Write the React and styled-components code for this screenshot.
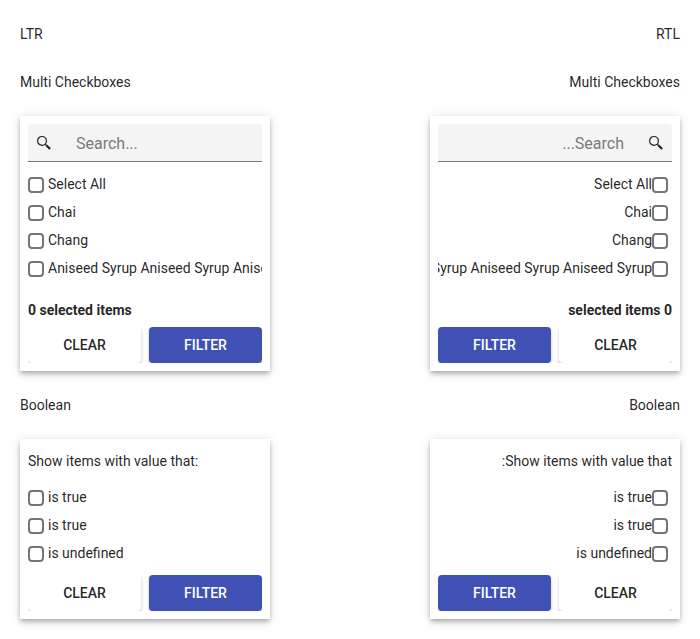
import React from 'react';
import styled, { createGlobalStyle } from 'styled-components';

const GlobalStyle = createGlobalStyle`
  * { box-sizing: border-box; }
  body {
    margin: 0;
    background: #fff;
    color: rgba(0, 0, 0, 0.87);
    font: 14px/20px Roboto, sans-serif;
  }
`;

const Page = styled.main`
  display: flex;
  justify-content: space-between;
  padding: 24px 20px 0;
  height: 639px;
  overflow: hidden;
`;

const Column = styled.section`
  width: 250px;
`;

const Heading = styled.p`
  margin: 0;
  height: 20px;
  margin-bottom: ${(p) => (p.$last ? 24 : 28)}px;
`;

const Card = styled.div`
  padding: 8px;
  height: ${(p) => p.$height}px;
  margin-bottom: 24px;
  background: #fff;
  box-shadow: 0 2px 4px -1px rgba(0, 0, 0, 0.2), 0 4px 5px 0 rgba(0, 0, 0, 0.14),
    0 1px 10px 0 rgba(0, 0, 0, 0.12);
  display: flex;
  flex-direction: column;
`;

const SearchBox = styled.label`
  display: flex;
  align-items: center;
  height: 38px;
  flex: none;
  margin-bottom: 8px;
  padding-inline-start: 8px;
  background: #f4f4f4;
  border-bottom: 1px solid #757575;
  border-radius: 4px 4px 0 0;

  svg { flex: none; width: 16px; height: 16px; }
`;

const SearchInput = styled.input`
  flex: 1;
  min-width: 0;
  height: 26px;
  margin-inline-start: 24px;
  padding: 2px 0 0;
  border: 0;
  outline: 0;
  background: transparent;
  font: 16px/24px Roboto, sans-serif;

  &::placeholder { color: #7a7a7a; opacity: 1; }
`;

const List = styled.ul`
  list-style: none;
  margin: 0;
  padding: 0;
  overflow: hidden;
`;

const Item = styled.li`
  display: flex;
  align-items: center;
  height: 28px;
  white-space: nowrap;
`;

const Checkbox = styled.input`
  appearance: none;
  flex: none;
  width: 16px;
  height: 16px;
  margin: 1px 4px 0 0;
  border: 2px solid #757575;
  border-radius: 4px;
  background: #fff;
`;

const ItemText = styled.span`
  line-height: 20px;
`;

const Prompt = styled.div`
  margin: 4px 0 12px;
`;

const Summary = styled.div`
  margin-top: 18px;
  font-weight: 700;
`;

const Actions = styled.div`
  display: flex;
  gap: 8px;
  margin-top: auto;
  overflow: hidden;
`;

const Button = styled.button`
  flex: 1;
  height: 36px;
  padding: 0;
  border: 0;
  border-radius: 4px;
  background: ${(p) => (p.$primary ? '#3f51b5' : '#fff')};
  color: ${(p) => (p.$primary ? '#fff' : 'rgba(0, 0, 0, 0.87)')};
  font: 500 14px/20px Roboto, sans-serif;
  text-transform: uppercase;
  box-shadow: 0 3px 1px -2px rgba(0, 0, 0, 0.2), 0 2px 2px 0 rgba(0, 0, 0, 0.14),
    0 1px 5px 0 rgba(0, 0, 0, 0.12);
`;

const SearchIcon = () => (
  <svg viewBox="0 0 16 16" fill="none" stroke="#212121">
    <circle cx="6" cy="5.9" r="4.4" strokeWidth="1.2" />
    <path d="M9.2 9.1l1.4 1.4" strokeWidth="1.2" />
    <path d="M10.3 10.2l3.8 3.8" strokeWidth="2.2" />
  </svg>
);

const Options = ({ items }) => (
  <List>
    {items.map((text, i) => (
      <Item key={i}>
        <Checkbox type="checkbox" aria-label={text} />
        <ItemText>{text}</ItemText>
      </Item>
    ))}
  </List>
);

const FilterActions = () => (
  <Actions>
    <Button>Clear</Button>
    <Button $primary>Filter</Button>
  </Actions>
);

const products = ['Select All', 'Chai', 'Chang', 'Aniseed Syrup Aniseed Syrup Aniseed Syrup'];
const states = ['is true', 'is true', 'is undefined'];

const FilterColumn = ({ dir }) => (
  <Column dir={dir}>
    <Heading>{dir.toUpperCase()}</Heading>
    <Heading $last>Multi Checkboxes</Heading>
    <Card $height={255}>
      <SearchBox>
        <SearchIcon />
        <SearchInput placeholder="Search..." />
      </SearchBox>
      <Options items={products} />
      <Summary>0 selected items</Summary>
      <FilterActions />
    </Card>
    <Heading $last>Boolean</Heading>
    <Card $height={180}>
      <Prompt>Show items with value that:</Prompt>
      <Options items={states} />
      <FilterActions />
    </Card>
  </Column>
);

export default function App() {
  return (
    <>
      <GlobalStyle />
      <Page>
        <FilterColumn dir="ltr" />
        <FilterColumn dir="rtl" />
      </Page>
    </>
  );
}
